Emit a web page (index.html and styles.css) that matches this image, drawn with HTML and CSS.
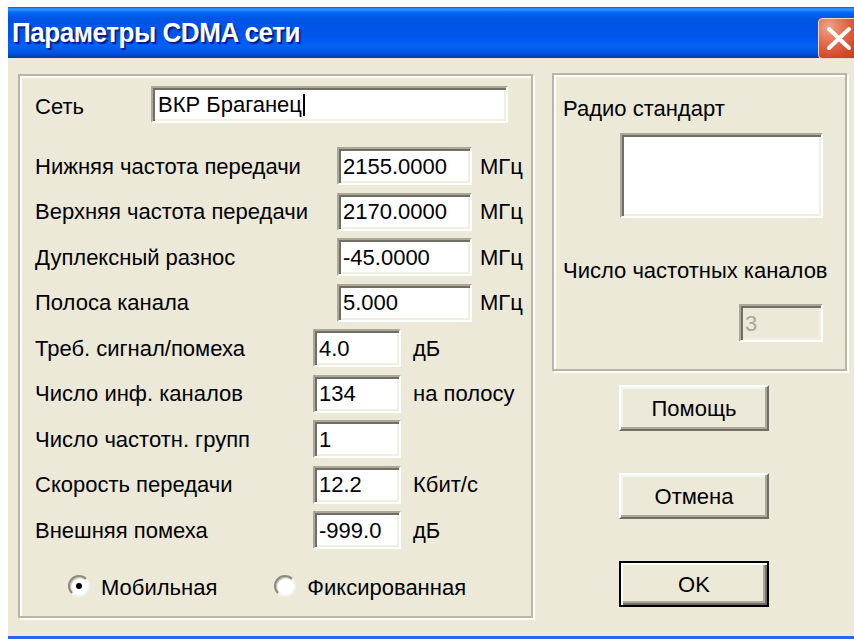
FILE: index.html
```html
<!DOCTYPE html>
<html lang="ru">
<head>
<meta charset="utf-8">
<title>Параметры CDMA сети</title>
<link rel="stylesheet" href="styles.css">
</head>
<body>
<div class="window">
  <div class="titlebar">
    <span class="title">Параметры CDMA сети</span>
    <div class="close-btn">
      <svg width="42" height="41" viewBox="0 0 42 41">
        <path d="M11 11 L31 30 M31 11 L11 30" stroke="#fff" stroke-width="4" stroke-linecap="round" fill="none"/>
      </svg>
    </div>
  </div>

  <div class="client">
    <div class="group params-group">
      <div class="row net-row">
        <span class="label net-label">Сеть</span>
        <div class="field net-field">ВКР Браганец<span class="caret"></span></div>
      </div>

      <div class="params">
        <div class="row">
          <span class="label">Нижняя частота передачи</span>
          <div class="field wide">2155.0000</div>
          <span class="unit unit-wide">МГц</span>
        </div>
        <div class="row">
          <span class="label">Верхняя частота передачи</span>
          <div class="field wide">2170.0000</div>
          <span class="unit unit-wide">МГц</span>
        </div>
        <div class="row">
          <span class="label">Дуплексный разнос</span>
          <div class="field wide">-45.0000</div>
          <span class="unit unit-wide">МГц</span>
        </div>
        <div class="row">
          <span class="label">Полоса канала</span>
          <div class="field wide">5.000</div>
          <span class="unit unit-wide">МГц</span>
        </div>
        <div class="row">
          <span class="label">Треб. сигнал/помеха</span>
          <div class="field narrow">4.0</div>
          <span class="unit">дБ</span>
        </div>
        <div class="row">
          <span class="label">Число инф. каналов</span>
          <div class="field narrow">134</div>
          <span class="unit">на полосу</span>
        </div>
        <div class="row">
          <span class="label">Число частотн. групп</span>
          <div class="field narrow">1</div>
        </div>
        <div class="row">
          <span class="label">Скорость передачи</span>
          <div class="field narrow">12.2</div>
          <span class="unit">Кбит/с</span>
        </div>
        <div class="row">
          <span class="label">Внешняя помеха</span>
          <div class="field narrow">-999.0</div>
          <span class="unit">дБ</span>
        </div>
      </div>

      <div class="radios">
        <span class="radio checked"></span>
        <span class="radio-label">Мобильная</span>
        <span class="radio second"></span>
        <span class="radio-label">Фиксированная</span>
      </div>
    </div>

    <div class="side">
      <div class="group std-group">
        <div class="std-label">Радио стандарт</div>
        <div class="field std-box"></div>
        <div class="chan-label">Число частотных каналов</div>
        <div class="field disabled chan-field">3</div>
      </div>

      <div class="buttons">
        <div class="btn">Помощь</div>
        <div class="btn">Отмена</div>
        <div class="btn default">OK</div>
      </div>
    </div>
  </div>
</div>
</body>
</html>
```

FILE: styles.css
```css
html, body {
  margin: 0;
  padding: 0;
  background: #fff;
  overflow: hidden;
}

body {
  width: 854px;
  height: 639px;
  font-family: "Liberation Sans", Arial, sans-serif;
  font-size: 22px;
  color: #000;
}

.window {
  margin: 7px 0 0 8px;
  width: 858px;
  border-bottom: 3px solid #2a63e6;
}

/* title bar */
.titlebar {
  height: 51px;
  box-sizing: border-box;
  display: flex;
  align-items: flex-start;
  padding: 10px 0 0 4px;
  background: linear-gradient(to bottom,
    #0058ee 0%, #3593ff 4%, #288eff 6%, #127dff 8%, #036ffc 10%,
    #0262ee 14%, #0057e5 20%, #0054e3 24%, #0055eb 56%, #005bf5 66%,
    #0461f4 76%, #0059e8 86%, #0050d6 92%, #0045c0 96%, #0038a8 100%);
}

.title {
  display: inline-block;
  font-family: "Liberation Sans", Arial, sans-serif;
  font-weight: bold;
  font-size: 28px;
  line-height: 32px;
  letter-spacing: -0.5px;
  color: #fff;
  text-shadow: 2px 2px 1px #0a1a86;
  transform: scaleX(0.93);
  transform-origin: left center;
  white-space: nowrap;
}

.close-btn {
  margin: 1px 6px 0 auto;
  width: 42px;
  height: 41px;
  box-sizing: border-box;
  border: 1px solid #f4d6cc;
  border-radius: 4px;
  background: radial-gradient(circle at 25% 22%, #f0a58c 0%, #e3704f 35%, #d2492a 70%, #c23a1c 100%);
  display: flex;
  align-items: center;
  justify-content: center;
}

.close-btn svg {
  display: block;
  margin: -1px;
}

/* client area */
.client {
  height: 578px;
  box-sizing: border-box;
  background: #ece9d8;
  display: flex;
  align-items: flex-start;
  padding: 16px 0 0 10px;
}

.group {
  box-sizing: border-box;
  border: 2px solid #b9b6a6;
  box-shadow: inset 2px 2px 0 #fff, 2px 2px 0 #fff;
}

.params-group {
  width: 515px;
  height: 544px;
  padding: 10px 0 0 15px;
}

.row {
  display: flex;
  align-items: center;
  height: 38px;
}

.label {
  width: 278px;
  line-height: 25px;
  white-space: nowrap;
}

.net-row {
  height: 37px;
}

.net-label {
  width: 116px;
  padding-top: 4px;
}

/* sunken edit box */
.field {
  box-sizing: border-box;
  height: 100%;
  background: #fff;
  border: 2px solid;
  border-color: #aca899 #fff #fff #aca899;
  box-shadow: inset 2px 2px 0 #716f64, inset -2px -2px 0 #f1efe2;
  padding: 0 0 0 4px;
  display: flex;
  align-items: center;
  white-space: nowrap;
  line-height: 25px;
}

.net-field {
  width: 357px;
  padding-left: 5px;
}

.caret {
  display: inline-block;
  width: 2px;
  height: 22px;
  background: #000;
  margin-left: 1px;
}

.params {
  margin-top: 24px;
  display: grid;
  grid-auto-rows: 38px;
  row-gap: 7.5px;
}

.field.wide {
  width: 135px;
  margin-left: 24px;
}

.field.narrow {
  width: 88px;
}

.unit {
  margin-left: 12px;
  line-height: 25px;
  white-space: nowrap;
}

.unit-wide {
  margin-left: 8px;
}

/* radio buttons */
.radios {
  margin-top: 25px;
  display: flex;
  align-items: center;
  height: 24px;
  padding-left: 33px;
}

.radio {
  width: 22px;
  height: 22px;
  box-sizing: border-box;
  border-radius: 50%;
  background: #fff;
  border: 2px solid;
  border-color: #8d8a7b #f4f3ec #f4f3ec #8d8a7b;
  box-shadow: inset 1px 1px 1px #bdbaa9;
  display: flex;
  align-items: center;
  justify-content: center;
}

.radio.checked::after {
  content: "";
  width: 6px;
  height: 6px;
  border-radius: 50%;
  background: #000;
}

.radio.second {
  margin-left: 57px;
}

.radio-label {
  margin-left: 11px;
  line-height: 25px;
  padding-top: 2px;
}

/* right column */
.side {
  margin-left: 19px;
  width: 295px;
}

.std-group {
  margin-top: -1px;
  height: 298px;
  padding: 21px 0 0 9px;
}

.std-label,
.chan-label {
  line-height: 25px;
  white-space: nowrap;
}

.std-box {
  margin: 12px 0 0 57px;
  width: 203px;
  height: 85px;
}

.chan-label {
  margin-top: 40px;
}

.chan-field {
  margin: 21px 0 0 176px;
  width: 84px;
  height: 38px;
}

.field.disabled {
  background: #ece9d8;
  color: #aca899;
}

.buttons {
  display: flex;
  flex-direction: column;
  gap: 42px;
  margin: 14px 0 0 67px;
}

.btn {
  width: 150px;
  height: 46px;
  box-sizing: border-box;
  background: #ece9d8;
  border: 2px solid;
  border-color: #fff #716f64 #716f64 #fff;
  box-shadow: inset -2px -2px 0 #aca899, inset 2px 2px 0 #f5f4ec;
  display: flex;
  align-items: center;
  justify-content: center;
  line-height: 25px;
}

.btn.default {
  border: 2px solid #000;
  box-shadow: inset 2px 2px 0 #fff, inset -2px -2px 0 #716f64, inset -4px -4px 0 #aca899;
}
```
